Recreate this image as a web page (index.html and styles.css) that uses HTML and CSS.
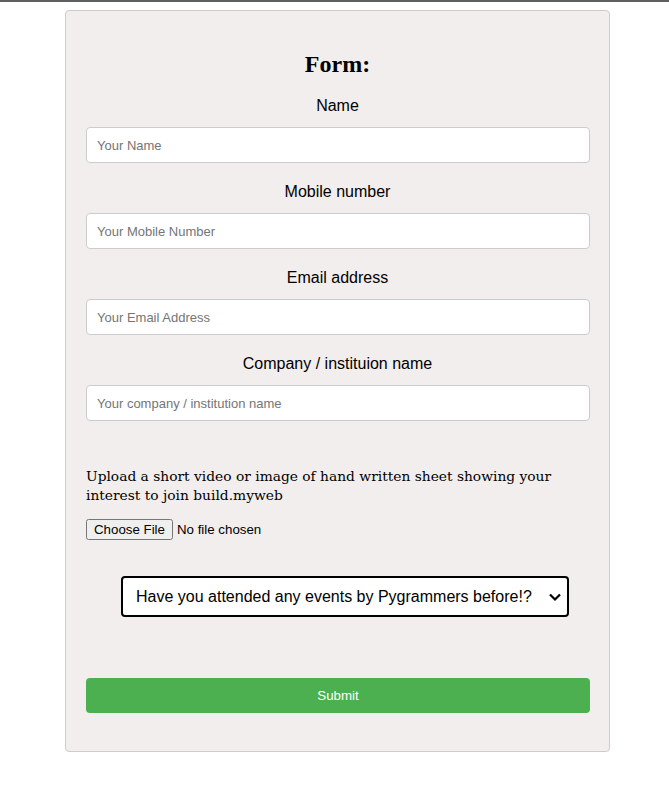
FILE: index.html
```html
<!DOCTYPE html>
<html>
<head>
<meta charset="utf-8">
<link rel="stylesheet" href="styles.css">
</head>
<body>
<div class="topbar"></div>
<div class="card">
  <h2 class="title">Form:</h2>
  <label class="label">Name</label>
  <input class="field" type="text" placeholder="Your Name">
  <label class="label">Mobile number</label>
  <input class="field" type="text" placeholder="Your Mobile Number">
  <label class="label">Email address</label>
  <input class="field" type="text" placeholder="Your Email Address">
  <label class="label">Company / instituion name</label>
  <input class="field" type="text" placeholder="Your company / institution name">
  <p class="upload">Upload a short video or image of hand written sheet showing your interest to join build.myweb</p>
  <input class="file" type="file">
  <div class="select-wrap">
    <select class="select">
      <option>Have you attended any events by Pygrammers before!?</option>
    </select>
    <svg class="chev" width="14" height="10" viewBox="0 0 14 10"><path d="M2 2.5 L7 7.5 L12 2.5" fill="none" stroke="#000" stroke-width="2.2"/></svg>
  </div>
  <button class="submit">Submit</button>
</div>
</body>
</html>
```
FILE: styles.css
```css
html, body { margin: 0; padding: 0; background: #fff; }
body { font-family: "Liberation Sans", Arial, sans-serif; }
.topbar { height: 2px; background: #5f5f61; }
.card {
  width: 503px;
  margin: 8px 0 0 65px;
  background: #f2eeed;
  border: 1px solid #cfcccb;
  border-radius: 4px;
  padding: 40px 20px 38px 20px;
  display: flex;
  flex-direction: column;
}
.title {
  font-family: "Liberation Serif", "Times New Roman", serif;
  font-size: 24px;
  font-weight: bold;
  line-height: 26px;
  margin: 0 0 20px 0;
  text-align: center;
}
.label {
  display: block;
  text-align: center;
  font-size: 16px;
  line-height: 18px;
  margin-bottom: 12px;
  color: #000;
}
.field {
  box-sizing: border-box;
  width: 504px;
  height: 36px;
  border: 1px solid #cccccc;
  border-radius: 4px;
  background: #fff;
  padding: 0 10px;
  font-family: "Liberation Sans", Arial, sans-serif;
  font-size: 13px;
  margin: 0 0 20px 0;
  outline: none;
}
.field::placeholder { color: #757575; }
.upload {
  font-family: "DejaVu Serif", Georgia, serif;
  font-size: 13.8px;
  line-height: 19px;
  margin: 26px 0 14px 0;
  color: #000;
}
.file {
  font-family: "Liberation Sans", Arial, sans-serif;
  font-size: 13.3px;
  height: 21px;
  margin: 0;
}
.select-wrap {
  position: relative;
  width: 448px;
  margin: 36px 0 0 35px;
}
.select {
  appearance: none;
  -webkit-appearance: none;
  box-sizing: border-box;
  width: 448px;
  height: 41px;
  border: 2px solid #000;
  border-radius: 4px;
  background: #fff;
  padding: 0 0 0 13px;
  font-family: "Liberation Sans", Arial, sans-serif;
  font-size: 16px;
  color: #000;
}
.chev { position: absolute; right: 7px; top: 16px; }
.submit {
  margin-top: 61px;
  width: 504px;
  height: 35px;
  background: #4caf50;
  color: #fff;
  border: none;
  border-radius: 4px;
  font-family: "Liberation Sans", Arial, sans-serif;
  font-size: 13.33px;
  font-weight: normal;
}
```
